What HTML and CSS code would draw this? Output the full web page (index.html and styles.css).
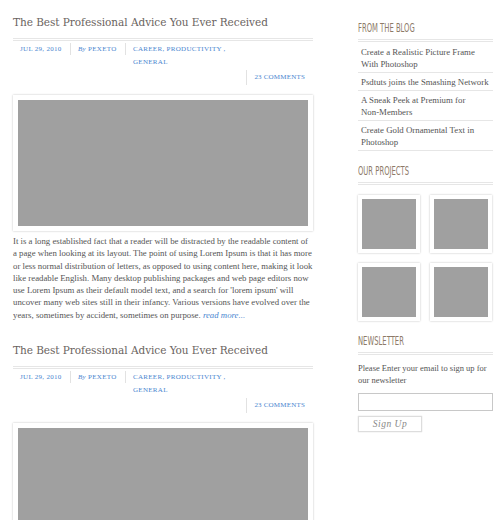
FILE: index.html
```html
<!DOCTYPE html>
<html>
<head>
<meta charset="utf-8">
<link rel="stylesheet" href="styles.css">
</head>
<body>
<div class="page">
  <div class="main">
    <div class="post">
      <h2 class="post-title">The Best Professional Advice You Ever Received</h2>
      <div class="dbl-line"></div>
      <div class="meta">
        <span class="meta-item date">Jul 29, 2010</span>
        <span class="meta-item author"><i>By</i> pexeto</span>
        <span class="meta-item cats">career, productivity ,<br>general</span>
      </div>
      <div class="comments-row"><span class="comments">23 comments</span></div>
      <div class="img-box"><div class="img"></div></div>
      <p class="excerpt">It is a long established fact that a reader will be distracted by the readable content of a page when looking at its layout. The point of using Lorem Ipsum is that it has more or less normal distribution of letters, as opposed to using content here, making it look like readable English. Many desktop publishing packages and web page editors now use Lorem Ipsum as their default model text, and a search for 'lorem ipsum' will uncover many web sites still in their infancy. Various versions have evolved over the years, sometimes by accident, sometimes on purpose. <a class="more">read more...</a></p>
    </div>
    <div class="post">
      <h2 class="post-title">The Best Professional Advice You Ever Received</h2>
      <div class="dbl-line"></div>
      <div class="meta">
        <span class="meta-item date">Jul 29, 2010</span>
        <span class="meta-item author"><i>By</i> pexeto</span>
        <span class="meta-item cats">career, productivity ,<br>general</span>
      </div>
      <div class="comments-row"><span class="comments">23 comments</span></div>
      <div class="img-box"><div class="img"></div></div>
    </div>
  </div>
  <div class="sidebar">
    <div class="widget">
      <h3 class="widget-title">From the Blog</h3>
      <div class="dbl-line"></div>
      <ul class="blog-list">
        <li>Create a Realistic Picture Frame With Photoshop</li>
        <li>Psdtuts joins the Smashing Network</li>
        <li>A Sneak Peek at Premium for Non&#8209;Members</li>
        <li>Create Gold Ornamental Text in Photoshop</li>
      </ul>
    </div>
    <div class="widget">
      <h3 class="widget-title">Our Projects</h3>
      <div class="dbl-line"></div>
      <div class="projects">
        <div class="thumb"><div class="thumb-img"></div></div>
        <div class="thumb"><div class="thumb-img"></div></div>
        <div class="thumb"><div class="thumb-img"></div></div>
        <div class="thumb"><div class="thumb-img"></div></div>
      </div>
    </div>
    <div class="widget">
      <h3 class="widget-title">Newsletter</h3>
      <div class="dbl-line"></div>
      <p class="nl-text">Please Enter your email to sign up for our newsletter</p>
      <div class="nl-input"></div>
      <div class="nl-btn">Sign Up</div>
    </div>
  </div>
</div>
</body>
</html>
```
FILE: styles.css
```css
html, body { margin: 0; padding: 0; background: #fff; }
body { font-family: "Liberation Serif", "DejaVu Serif", serif; color: #555; }
.page { display: flex; padding-left: 13px; }
.main { width: 300px; }
.sidebar { width: 135px; margin-left: 45px; padding-top: 22px; }

.post-title {
  margin: 0; padding-top: 15px; height: 23px;
  font-family: "DejaVu Serif", serif; font-stretch: condensed; font-weight: normal;
  font-size: 11.7px; line-height: 14px; color: #6a6360; letter-spacing: -0.05px;
}
.dbl-line { height: 1px; border-top: 1px solid #e6e6e6; border-bottom: 1px solid #e6e6e6; }
.meta { display: flex; margin-top: 2px; font-size: 7px; color: #4a86d0; text-transform: uppercase; letter-spacing: 0.3px; line-height: 12.5px; }
.meta-item { border-right: 1px solid #e2e2e2; padding: 0 8px 0 7px; height: 12px; }
.meta-item.date { width: 42px; }
.meta-item.author { width: 39px; }
.meta-item.cats { border-right: none; height: auto; padding-left: 7px; }
.meta-item i { text-transform: none; }
.comments-row { display: flex; justify-content: flex-end; margin-top: 2px; }
.comments { font-size: 7px; color: #4a86d0; text-transform: uppercase; letter-spacing: 0.2px; border-left: 1px solid #e2e2e2; padding: 2px 8px 2px 7px; line-height: 11px; }
.img-box { margin-top: 10px; background: #fff; padding: 5px; box-shadow: 0 0 2px rgba(0,0,0,0.25); }
.img { height: 126px; background: #a0a0a0; }
.excerpt { margin: 4px 0 0; font-size: 8.78px; line-height: 12.3px; color: #555; }
.more { color: #4a86d0; font-style: italic; }
.post + .post { margin-top: 7px; }

.widget + .widget { margin-top: 14px; }
.widget-title {
  margin: 0 0 5px; font-family: "DejaVu Sans", sans-serif; font-stretch: condensed;
  font-weight: normal; font-size: 11.5px; color: #8d7a68; white-space: nowrap;
  text-transform: uppercase; letter-spacing: 0; height: 12px; line-height: 12px;
  transform: scaleX(0.66); transform-origin: left center;
}
.blog-list { list-style: none; margin: 1px 0 0; padding: 0; }
.blog-list li { font-size: 8.8px; line-height: 12px; padding: 3px 3px 2px 3px; border-bottom: 1px solid #e6e6e6; color: #555; }
.projects { display: grid; grid-template-columns: 62px 62px; column-gap: 10px; row-gap: 10px; margin-top: 10px; }
.thumb { height: 50px; padding: 4px; box-shadow: 0 0 2px rgba(0,0,0,0.25); background: #fff; }
.thumb-img { height: 100%; background: #a0a0a0; }
.nl-text { margin: 7px 0 0; font-size: 8.5px; line-height: 12px; }
.nl-input { margin-top: 7px; height: 16px; border: 1px solid #c8c8c8; }
.nl-btn { margin-top: 5px; width: 62px; height: 14px; border: 1px solid #ddd; box-shadow: 0 0 1px rgba(0,0,0,0.2); text-align: center; font-style: italic; font-size: 9.5px; line-height: 14px; color: #888; letter-spacing: 0.5px; }
```
